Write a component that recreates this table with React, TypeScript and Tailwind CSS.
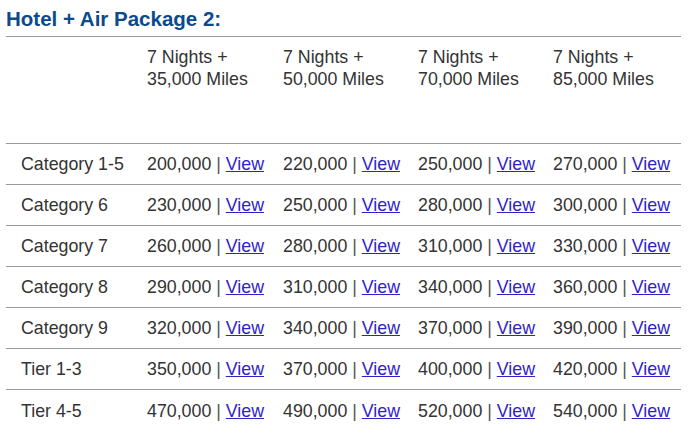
import React from "react";

const rows: [string, string[]][] = [
  ["Category 1-5", ["200,000", "220,000", "250,000", "270,000"]],
  ["Category 6", ["230,000", "250,000", "280,000", "300,000"]],
  ["Category 7", ["260,000", "280,000", "310,000", "330,000"]],
  ["Category 8", ["290,000", "310,000", "340,000", "360,000"]],
  ["Category 9", ["320,000", "340,000", "370,000", "390,000"]],
  ["Tier 1-3", ["350,000", "370,000", "400,000", "420,000"]],
  ["Tier 4-5", ["470,000", "490,000", "520,000", "540,000"]],
];

const miles = ["35,000", "50,000", "70,000", "85,000"];

const grid = "grid grid-cols-[141px_136px_135px_135px_1fr]";

export default function App() {
  return (
    <div
      className="w-[691px] h-[444px] bg-white text-[#333] pl-[6px] pr-[10px] pt-[7px]"
      style={{ fontFamily: '"Liberation Sans", Arial, sans-serif' }}
    >
      <h2 className="text-[20.5px] leading-[23px] font-bold text-[#0b4a8b] pb-[6px] border-b border-[#999]">
        Hotel + Air Package 2:
      </h2>
      <div className={`${grid} h-[107px] border-b border-[#999] text-[17.8px] leading-[22px] pt-[9px]`}>
        <div />
        {miles.map((m) => (
          <div key={m}>
            7 Nights +<br />
            {m} Miles
          </div>
        ))}
      </div>
      {rows.map(([label, vals], i) => (
        <div
          key={label}
          className={`${grid} h-[41px] items-center text-[17.8px] leading-[22px] ${
            i < rows.length - 1 ? "border-b border-[#999]" : ""
          }`}
        >
          <div className="pl-[15px]">{label}</div>
          {vals.map((v, j) => (
            <div key={j} className="whitespace-nowrap">
              {v} <span className="text-[#555]">|</span>{" "}
              <a href="#" className="text-[#2f22c9] underline">
                View
              </a>
            </div>
          ))}
        </div>
      ))}
    </div>
  );
}
